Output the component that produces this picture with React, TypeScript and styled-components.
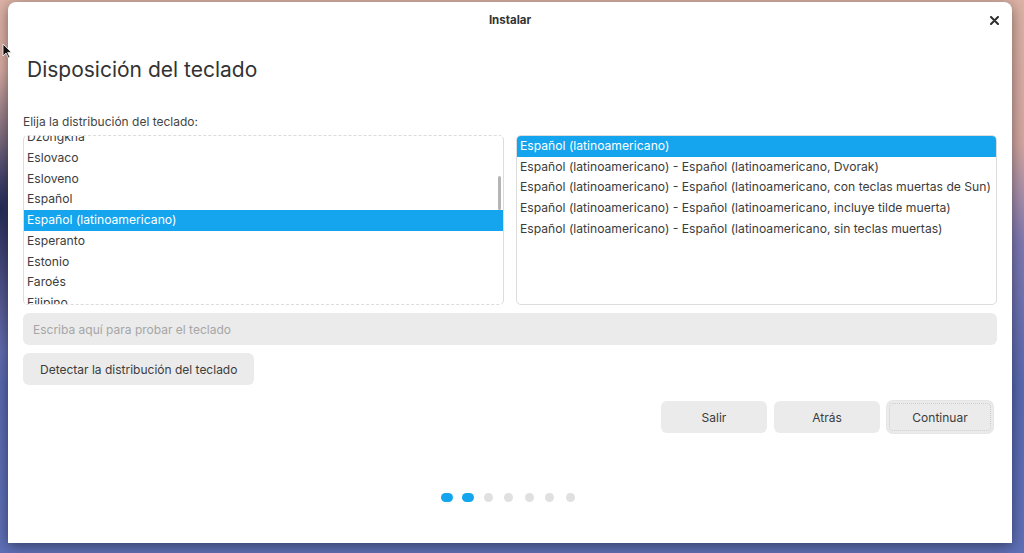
import React, { useLayoutEffect, useRef } from "react";
import styled, { createGlobalStyle } from "styled-components";

const GlobalStyle = createGlobalStyle`
  html, body {
    margin: 0;
    padding: 0;
  }
  body {
    font-family: Inter, "Noto Sans", sans-serif;
    background:
      radial-gradient(ellipse 60px 140px at 0px 210px, #232b5a 0%, rgba(35, 43, 90, 0) 100%),
      linear-gradient(180deg, #dcb2a5 0%, #d2a6a0 26%, #7d78b2 44%, #5869b0 70%, #5f70b8 100%);
    overflow: hidden;
  }
`;

const leftItems = [
  "Dinamarqués",
  "Dhivehi",
  "Dzongkha",
  "Eslovaco",
  "Esloveno",
  "Español",
  "Español (latinoamericano)",
  "Esperanto",
  "Estonio",
  "Faroés",
  "Filipino",
  "Finlandés",
  "Francés",
];

const rightItems = [
  "Español (latinoamericano)",
  "Español (latinoamericano) - Español (latinoamericano, Dvorak)",
  "Español (latinoamericano) - Español (latinoamericano, con teclas muertas de Sun)",
  "Español (latinoamericano) - Español (latinoamericano, incluye tilde muerta)",
  "Español (latinoamericano) - Español (latinoamericano, sin teclas muertas)",
];

const ROW = 20.7;

export default function App() {
  const listRef = useRef<HTMLDivElement>(null);

  useLayoutEffect(() => {
    if (listRef.current) listRef.current.scrollTop = ROW * 2 + 9;
  }, []);

  return (
    <Desktop>
      <GlobalStyle />
      <Cursor width="10" height="16" viewBox="0 0 10 16">
        <path d="M1 1 L1 13 L4 10 L6.5 15 L8 14.3 L5.6 9.4 L9.5 9.4 Z" fill="#111" stroke="#fff" strokeWidth="0.8" />
      </Cursor>
      <Window>
        <TitleBar>
          <Title>Instalar</Title>
          <CloseButton aria-label="Cerrar">
            <svg width="9" height="9" viewBox="0 0 9 9">
              <path d="M1 1 L8 8 M8 1 L1 8" stroke="#2e2e2e" strokeWidth="2" strokeLinecap="round" />
            </svg>
          </CloseButton>
        </TitleBar>
        <Content>
          <Heading>Disposición del teclado</Heading>
          <Label>Elija la distribución del teclado:</Label>
          <Lists>
            <ListFrame $dashed>
              <ListScroll ref={listRef}>
                {leftItems.map((item) => (
                  <Row key={item} $selected={item === "Español (latinoamericano)"}>
                    {item}
                  </Row>
                ))}
              </ListScroll>
              <ScrollThumb />
            </ListFrame>
            <ListFrame>
              <ListScroll>
                {rightItems.map((item, i) => (
                  <Row key={item} $selected={i === 0}>
                    {item}
                  </Row>
                ))}
              </ListScroll>
            </ListFrame>
          </Lists>
          <TestInput placeholder="Escriba aquí para probar el teclado" />
          <DetectRow>
            <Button>Detectar la distribución del teclado</Button>
          </DetectRow>
          <Actions>
            <ActionButton>Salir</ActionButton>
            <ActionButton>Atrás</ActionButton>
            <ActionButton $focused>Continuar</ActionButton>
          </Actions>
          <Dots>
            {[0, 1, 2, 3, 4, 5, 6].map((i) => (
              <DotSlot key={i}>
                <Dot $active={i < 2} />
              </DotSlot>
            ))}
          </Dots>
        </Content>
      </Window>
    </Desktop>
  );
}

const Desktop = styled.div`
  position: relative;
  height: 553px;
  padding: 2px 12px 10px 8px;
  box-sizing: border-box;
  display: flex;
`;

const Cursor = styled.svg`
  position: absolute;
  left: 2px;
  top: 43px;
  z-index: 5;
`;

const Window = styled.div`
  width: 1004px;
  height: 541px;
  background: #fff;
  border-radius: 8px 8px 0 0;
  box-shadow: 0 3px 14px rgba(0, 0, 0, 0.45);
  display: flex;
  flex-direction: column;
  color: #3a3a3a;
`;

const TitleBar = styled.div`
  position: relative;
  height: 36px;
  display: flex;
  align-items: center;
  justify-content: center;
  flex-shrink: 0;
`;

const Title = styled.div`
  font-size: 11.5px;
  font-weight: 700;
  color: #333;
`;

const CloseButton = styled.button`
  position: absolute;
  right: 12px;
  top: 12px;
  width: 12px;
  height: 12px;
  padding: 0;
  border: none;
  background: none;
  display: flex;
  align-items: center;
  justify-content: center;
`;

const Content = styled.div`
  flex: 1;
  display: flex;
  flex-direction: column;
  padding: 0 15px;
`;

const Heading = styled.h1`
  margin: 19px 0 0 4px;
  font-size: 21px;
  line-height: 26px;
  font-weight: 400;
  color: #333;
`;

const Label = styled.div`
  margin-top: 31px;
  font-size: 12px;
  line-height: 16px;
  color: #444;
`;

const Lists = styled.div`
  margin-top: 5px;
  display: grid;
  grid-template-columns: 1fr 1fr;
  gap: 12px;
  height: 170px;
`;

const ListFrame = styled.div<{ $dashed?: boolean }>`
  position: relative;
  border: 1px solid #dcdcdc;
  border-top-style: ${(p) => (p.$dashed ? "dashed" : "solid")};
  border-bottom-style: ${(p) => (p.$dashed ? "dashed" : "solid")};
  border-radius: 5px;
  overflow: hidden;
  background: #fff;
`;

const ListScroll = styled.div`
  height: 100%;
  overflow: hidden;
`;

const Row = styled.div<{ $selected?: boolean }>`
  height: ${ROW}px;
  line-height: ${ROW}px;
  padding: 0 3px;
  font-size: 12.15px;
  white-space: nowrap;
  background: ${(p) => (p.$selected ? "#15a5ee" : "transparent")};
  color: ${(p) => (p.$selected ? "#fff" : "#3c3c3c")};
`;

const ScrollThumb = styled.div`
  position: absolute;
  right: 2px;
  top: 40px;
  width: 3px;
  height: 34px;
  border-radius: 2px;
  background: #b5b5b5;
`;

const TestInput = styled.input`
  margin-top: 8px;
  height: 32px;
  box-sizing: border-box;
  border: none;
  border-radius: 6px;
  background: #ebebeb;
  padding: 0 10px;
  font-family: inherit;
  font-size: 12px;
  color: #333;
  outline: none;
  &::placeholder {
    color: #a6a6a6;
  }
`;

const DetectRow = styled.div`
  margin-top: 8px;
  display: flex;
`;

const Button = styled.button`
  height: 32px;
  padding: 0 17px;
  border: none;
  border-radius: 6px;
  background: #ebebeb;
  font-family: inherit;
  font-size: 12px;
  color: #3c3c3c;
`;

const Actions = styled.div`
  margin-top: 16px;
  display: flex;
  justify-content: flex-end;
  gap: 7px;
  padding-right: 4px;
`;

const ActionButton = styled(Button)<{ $focused?: boolean }>`
  width: 106px;
  padding: 0;
  outline: ${(p) => (p.$focused ? "1px dotted #cdcdcd" : "none")};
  outline-offset: -3px;
  box-shadow: ${(p) => (p.$focused ? "0 0 0 1px #e6e6e6" : "none")};
`;

const Dots = styled.div`
  margin-top: 60px;
  display: flex;
  justify-content: center;
  gap: 8.5px;
  padding-right: 3px;
`;

const DotSlot = styled.div`
  width: 12px;
  height: 9px;
  display: flex;
  justify-content: center;
`;

const Dot = styled.div<{ $active?: boolean }>`
  width: ${(p) => (p.$active ? "12px" : "9px")};
  height: 9px;
  border-radius: 5px;
  background: ${(p) => (p.$active ? "#15a5ee" : "#e0e0e0")};
`;
